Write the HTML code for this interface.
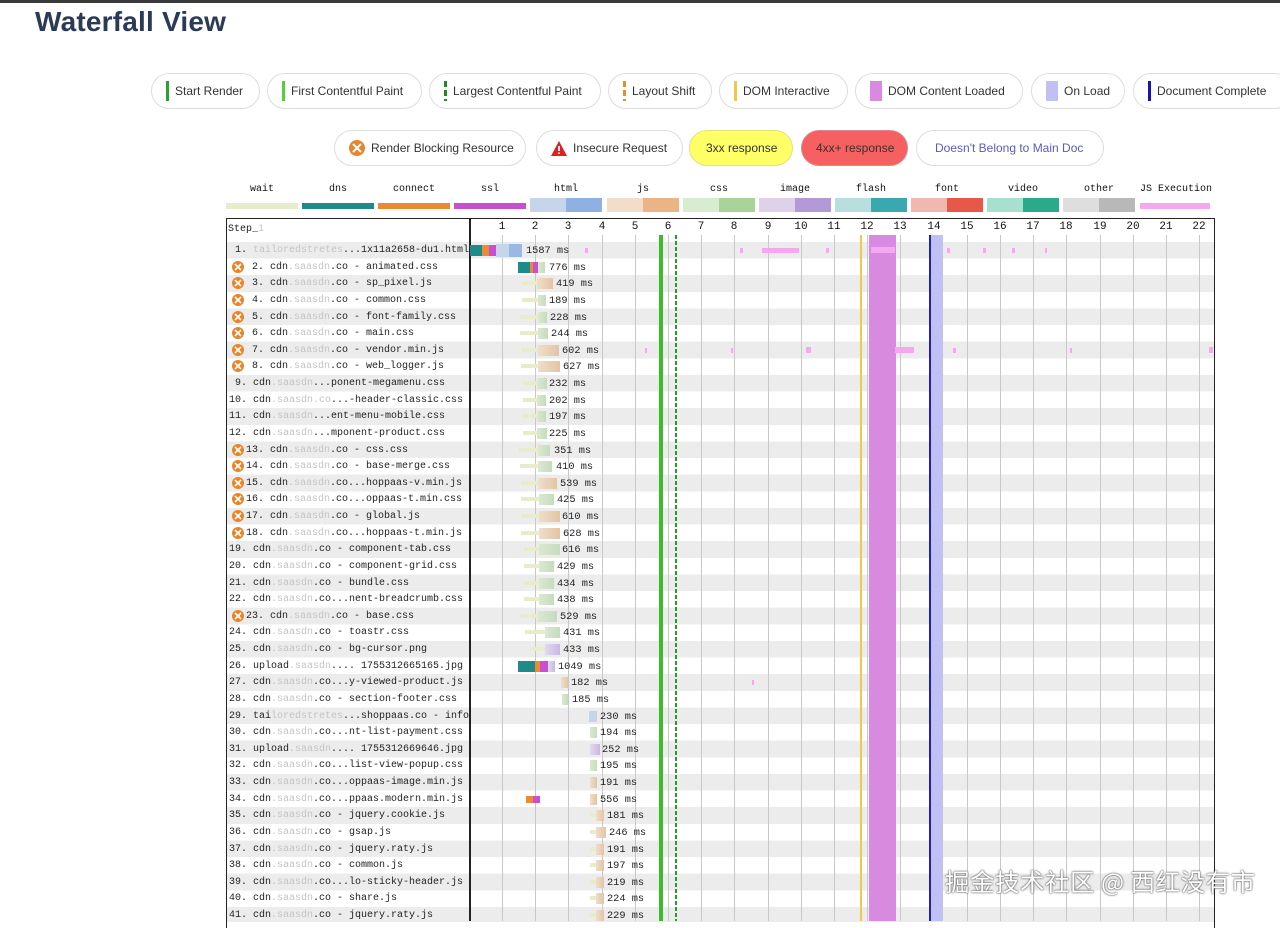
<!DOCTYPE html>
<html><head><meta charset="utf-8"><style>
*{margin:0;padding:0;box-sizing:border-box}
body{width:1280px;height:921px;overflow:hidden;background:#fff;position:relative;font-family:"Liberation Sans",sans-serif}
.topbar{position:absolute;left:0;top:0;width:1280px;height:3px;background:#3a3a3a}
h1{position:absolute;left:35px;top:6px;font-size:28px;font-weight:bold;color:#2b3a55;letter-spacing:0.2px}
.p{position:absolute;height:36px;border:1px solid #ddd;border-radius:18px;font-size:12px;color:#333;display:flex;align-items:center;padding-left:14px;white-space:nowrap}
.p i{display:inline-block;width:3px;height:20px;margin-right:6px}
.lg{position:absolute;top:184px;font:10px "Liberation Mono",monospace;color:#111;text-align:center;width:72px}
.lb{position:absolute;height:14px;top:198px;width:72px}
.tbl{position:absolute;left:226px;top:218px;width:989px;height:710px;border:1.5px solid #222;border-bottom:none;background:#fff}
.str{position:absolute;left:227px;top:242px;width:987px;height:680px;background:repeating-linear-gradient(to bottom,#ececec 0,#ececec 16.625px,#fff 16.625px,#fff 33.25px)}
.div{position:absolute;left:469px;top:218px;width:1.5px;height:703px;background:#222}
.g{position:absolute;top:235px;width:1px;height:686px;background:#c8c8c8}
.tk{position:absolute;top:221px;font:11px "Liberation Mono",monospace;color:#111;width:20px;text-align:center}
.r{position:absolute;left:0;width:1280px;height:16.6px}
.t{position:absolute;top:3px;font:10px "Liberation Mono",monospace;color:#222;white-space:pre}
.t u{text-decoration:none;color:#c4c4c4}
.m{position:absolute;top:3px;font:10.3px "Liberation Mono",monospace;color:#222;white-space:pre}
.r b{position:absolute;top:3px;height:11px}
.r b.w{top:6px;height:4px;background:#e9ecc8}
.d{background:#1f8a8a}.c{background:#ec8a32}.s{background:#c84fd0}
.h{background:linear-gradient(90deg,#c6d5ea 50%,#9bb8e4 50%)}
.j{background:linear-gradient(90deg,#efdecb,#e3c4a4)}
.cs{background:linear-gradient(90deg,#dbe8d3,#c5dcbc)}
.im{background:linear-gradient(90deg,#e2daee,#c9b8e0)}
.x{background:#f5a8ef}
.bi{position:absolute;left:232px;top:2px;width:12px;height:12px}
.ml{position:absolute;top:235px;height:686px}
.wm{position:absolute;left:945px;top:864px;font:24.5px "Noto Sans CJK SC",sans-serif;color:#fff;text-shadow:0 0 2px #555,0 0 1px #333;white-space:nowrap;letter-spacing:0.5px}
</style></head><body>
<div class="topbar"></div>
<h1>Waterfall View</h1>

<div class="p" style="left:151px;top:73px;width:109px"><i style="background:#2ea02e"></i>Start Render</div>
<div class="p" style="left:267px;top:73px;width:155px"><i style="background:#55d035"></i>First Contentful Paint</div>
<div class="p" style="left:429px;top:73px;width:172px"><i style="background:repeating-linear-gradient(#1e8a1e 0 6px,transparent 6px 9px)"></i>Largest Contentful Paint</div>
<div class="p" style="left:608px;top:73px;width:104px"><i style="background:repeating-linear-gradient(#ec8a32 0 6px,transparent 6px 9px)"></i>Layout Shift</div>
<div class="p" style="left:719px;top:73px;width:129px"><i style="background:#f0c94a"></i>DOM Interactive</div>
<div class="p" style="left:855px;top:73px;width:168px"><i style="background:#d88ae0;width:12px"></i>DOM Content Loaded</div>
<div class="p" style="left:1031px;top:73px;width:94px"><i style="background:#c0c0f5;width:12px"></i>On Load</div>
<div class="p" style="left:1133px;top:73px;width:160px"><i style="background:#1515bb"></i>Document Complete</div>

<div class="p" style="left:334px;top:130px;width:192px"><svg width="16" height="16" viewBox="0 0 16 16" style="margin-right:6px"><circle cx="8" cy="8" r="8" fill="#e8842a"/><path d="M4 4L12 12M12 4L4 12" stroke="#fff" stroke-width="2"/></svg>Render Blocking Resource</div>
<div class="p" style="left:536px;top:130px;width:147px"><svg width="16" height="15" viewBox="0 0 16 15" style="margin-right:6px"><path d="M8 0L16 15H0Z" fill="#e02020"/><path d="M8 5V10M8 11.5V13" stroke="#fff" stroke-width="1.8"/></svg>Insecure Request</div>
<div class="p" style="left:689px;top:130px;width:104px;background:#ffff66;border-color:#e0e080;padding-left:16px">3xx response</div>
<div class="p" style="left:801px;top:130px;width:107px;background:#f76060;border-color:#d88;padding-left:14px">4xx+ response</div>
<div class="p" style="left:916px;top:130px;width:188px;color:#5a5ac0;padding-left:18px">Doesn't Belong to Main Doc</div>

<div class="lg" style="left:226px">wait</div><div class="lb" style="left:226px;top:203px;height:6px;background:#e9ecc8"></div>
<div class="lg" style="left:302px">dns</div><div class="lb" style="left:302px;top:203px;height:6px;background:#1f8a8a"></div>
<div class="lg" style="left:378px">connect</div><div class="lb" style="left:378px;top:203px;height:6px;background:#ec8a32"></div>
<div class="lg" style="left:454px">ssl</div><div class="lb" style="left:454px;top:203px;height:6px;background:#c84fd0"></div>
<div class="lg" style="left:530px">html</div><div class="lb" style="left:530px;background:linear-gradient(90deg,#c6d5ea 50%,#8fb0e2 50%)"></div>
<div class="lg" style="left:607px">js</div><div class="lb" style="left:607px;background:linear-gradient(90deg,#f1ddc9 50%,#eab484 50%)"></div>
<div class="lg" style="left:683px">css</div><div class="lb" style="left:683px;background:linear-gradient(90deg,#d8ecd2 50%,#a8d49a 50%)"></div>
<div class="lg" style="left:759px">image</div><div class="lb" style="left:759px;background:linear-gradient(90deg,#ddd2ea 50%,#b39ad6 50%)"></div>
<div class="lg" style="left:835px">flash</div><div class="lb" style="left:835px;background:linear-gradient(90deg,#b8dede 50%,#3aa8b0 50%)"></div>
<div class="lg" style="left:911px">font</div><div class="lb" style="left:911px;background:linear-gradient(90deg,#f0b8b0 50%,#e85848 50%)"></div>
<div class="lg" style="left:987px">video</div><div class="lb" style="left:987px;background:linear-gradient(90deg,#a8e0d0 50%,#2aaa88 50%)"></div>
<div class="lg" style="left:1063px">other</div><div class="lb" style="left:1063px;background:linear-gradient(90deg,#dedede 50%,#b8b8b8 50%)"></div>
<div class="lg" style="left:1137px;width:78px">JS Execution</div><div class="lb" style="left:1140px;top:203px;height:6px;width:70px;background:#f5a8ef"></div>

<div class="tbl"></div>
<div class="str"></div>
<div class="t" style="left:228px;top:224px;font-size:10px">Step_<u>1</u></div>

<div class="g" style="left:502px"></div><div class="g" style="left:535px"></div><div class="g" style="left:568px"></div><div class="g" style="left:602px"></div><div class="g" style="left:635px"></div><div class="g" style="left:668px"></div><div class="g" style="left:701px"></div><div class="g" style="left:734px"></div><div class="g" style="left:768px"></div><div class="g" style="left:801px"></div><div class="g" style="left:834px"></div><div class="g" style="left:867px"></div><div class="g" style="left:900px"></div><div class="g" style="left:934px"></div><div class="g" style="left:967px"></div><div class="g" style="left:1000px"></div><div class="g" style="left:1033px"></div><div class="g" style="left:1066px"></div><div class="g" style="left:1100px"></div><div class="g" style="left:1133px"></div><div class="g" style="left:1166px"></div><div class="g" style="left:1199px"></div>
<div class="tk" style="left:492px">1</div><div class="tk" style="left:525px">2</div><div class="tk" style="left:558px">3</div><div class="tk" style="left:592px">4</div><div class="tk" style="left:625px">5</div><div class="tk" style="left:658px">6</div><div class="tk" style="left:691px">7</div><div class="tk" style="left:724px">8</div><div class="tk" style="left:758px">9</div><div class="tk" style="left:791px">10</div><div class="tk" style="left:824px">11</div><div class="tk" style="left:857px">12</div><div class="tk" style="left:890px">13</div><div class="tk" style="left:924px">14</div><div class="tk" style="left:957px">15</div><div class="tk" style="left:990px">16</div><div class="tk" style="left:1023px">17</div><div class="tk" style="left:1056px">18</div><div class="tk" style="left:1090px">19</div><div class="tk" style="left:1123px">20</div><div class="tk" style="left:1156px">21</div><div class="tk" style="left:1189px">22</div>
<div class="div"></div>

<div class="ml" style="left:869px;width:27px;background:#d88ae0"></div>
<div class="ml" style="left:929px;width:14px;background:#c0c0f5"></div>
<div class="ml" style="left:929px;width:2px;background:#2222aa"></div>
<div class="ml" style="left:860px;width:2px;background:#f0c94a"></div>
<div class="ml" style="left:659px;width:4px;background:#3dbb2a"></div>
<div class="ml" style="left:675px;width:2px;background:repeating-linear-gradient(#2a9a2a 0 4px,transparent 4px 6px)"></div>

<div class="r" style="top:242px"><span class="t" style="left:229px"> 1. <u>tailoredstretes</u>...1x11a2658-du1.html</span><b class="d" style="left:470px;width:12px"></b><b class="c" style="left:482px;width:7px"></b><b class="s" style="left:489px;width:7px"></b><b class="h" style="left:496px;width:26px;height:13px;top:2px"></b><span class="m" style="left:526px">1587 ms</span><b class="x" style="left:585px;width:3px;height:5px;top:6px"></b><b class="x" style="left:740px;width:3px;height:5px;top:6px"></b><b class="x" style="left:762px;width:37px;height:5px;top:6px"></b><b class="x" style="left:826px;width:3px;height:5px;top:6px"></b><b class="x" style="left:871px;width:24px;height:6px;top:5px"></b><b class="x" style="left:947px;width:3px;height:5px;top:6px"></b><b class="x" style="left:983px;width:3px;height:5px;top:6px"></b><b class="x" style="left:1012px;width:3px;height:5px;top:6px"></b><b class="x" style="left:1045px;width:2px;height:5px;top:6px"></b></div>
<div class="r" style="top:258.6px"><svg class="bi" viewBox="0 0 12 12"><circle cx="6" cy="6" r="6" fill="#e8842a"/><path d="M3 3L9 9M9 3L3 9" stroke="#fff" stroke-width="1.6"/></svg><span class="t" style="left:246px"> 2. cdn<u>.saasdn</u>.co - animated.css</span><b class="d" style="left:518px;width:12px"></b><b class="c" style="left:530px;width:3px"></b><b class="s" style="left:533px;width:5px"></b><b class="cs" style="left:538px;width:7px"></b><span class="m" style="left:549px">776 ms</span></div>
<div class="r" style="top:275.3px"><svg class="bi" viewBox="0 0 12 12"><circle cx="6" cy="6" r="6" fill="#e8842a"/><path d="M3 3L9 9M9 3L3 9" stroke="#fff" stroke-width="1.6"/></svg><span class="t" style="left:246px"> 3. cdn<u>.saasdn</u>.co - sp_pixel.js</span><b class="w" style="left:522px;width:15px"></b><b class="j" style="left:537px;width:16px"></b><span class="m" style="left:556px">419 ms</span></div>
<div class="r" style="top:291.9px"><svg class="bi" viewBox="0 0 12 12"><circle cx="6" cy="6" r="6" fill="#e8842a"/><path d="M3 3L9 9M9 3L3 9" stroke="#fff" stroke-width="1.6"/></svg><span class="t" style="left:246px"> 4. cdn<u>.saasdn</u>.co - common.css</span><b class="w" style="left:522px;width:16px"></b><b class="cs" style="left:538px;width:8px"></b><span class="m" style="left:549px">189 ms</span></div>
<div class="r" style="top:308.5px"><svg class="bi" viewBox="0 0 12 12"><circle cx="6" cy="6" r="6" fill="#e8842a"/><path d="M3 3L9 9M9 3L3 9" stroke="#fff" stroke-width="1.6"/></svg><span class="t" style="left:246px"> 5. cdn<u>.saasdn</u>.co - font-family.css</span><b class="w" style="left:520px;width:18px"></b><b class="cs" style="left:538px;width:9px"></b><span class="m" style="left:550px">228 ms</span></div>
<div class="r" style="top:325.1px"><svg class="bi" viewBox="0 0 12 12"><circle cx="6" cy="6" r="6" fill="#e8842a"/><path d="M3 3L9 9M9 3L3 9" stroke="#fff" stroke-width="1.6"/></svg><span class="t" style="left:246px"> 6. cdn<u>.saasdn</u>.co - main.css</span><b class="w" style="left:520px;width:18px"></b><b class="cs" style="left:538px;width:10px"></b><span class="m" style="left:551px">244 ms</span></div>
<div class="r" style="top:341.8px"><svg class="bi" viewBox="0 0 12 12"><circle cx="6" cy="6" r="6" fill="#e8842a"/><path d="M3 3L9 9M9 3L3 9" stroke="#fff" stroke-width="1.6"/></svg><span class="t" style="left:246px"> 7. cdn<u>.saasdn</u>.co - vendor.min.js</span><b class="w" style="left:521px;width:17px"></b><b class="j" style="left:538px;width:21px"></b><span class="m" style="left:562px">602 ms</span><b class="x" style="left:645px;width:2px;height:5px;top:6px"></b><b class="x" style="left:731px;width:2px;height:5px;top:6px"></b><b class="x" style="left:806px;width:5px;height:6px;top:5px"></b><b class="x" style="left:895px;width:19px;height:6px;top:5px"></b><b class="x" style="left:953px;width:3px;height:5px;top:6px"></b><b class="x" style="left:1070px;width:2px;height:5px;top:6px"></b><b class="x" style="left:1209px;width:4px;height:6px;top:5px"></b></div>
<div class="r" style="top:358.4px"><svg class="bi" viewBox="0 0 12 12"><circle cx="6" cy="6" r="6" fill="#e8842a"/><path d="M3 3L9 9M9 3L3 9" stroke="#fff" stroke-width="1.6"/></svg><span class="t" style="left:246px"> 8. cdn<u>.saasdn</u>.co - web_logger.js</span><b class="w" style="left:521px;width:17px"></b><b class="j" style="left:538px;width:22px"></b><span class="m" style="left:563px">627 ms</span></div>
<div class="r" style="top:375px"><span class="t" style="left:229px"> 9. cdn<u>.saasdn</u>...ponent-megamenu.css</span><b class="w" style="left:523px;width:14px"></b><b class="cs" style="left:537px;width:10px"></b><span class="m" style="left:549px">232 ms</span></div>
<div class="r" style="top:391.6px"><span class="t" style="left:229px">10. cdn<u>.saasdn.co</u>...-header-classic.css</span><b class="w" style="left:523px;width:14px"></b><b class="cs" style="left:537px;width:9px"></b><span class="m" style="left:549px">202 ms</span></div>
<div class="r" style="top:408.3px"><span class="t" style="left:229px">11. cdn<u>.saasdn</u>...ent-menu-mobile.css</span><b class="w" style="left:523px;width:14px"></b><b class="cs" style="left:537px;width:9px"></b><span class="m" style="left:549px">197 ms</span></div>
<div class="r" style="top:424.9px"><span class="t" style="left:229px">12. cdn<u>.saasdn</u>...mponent-product.css</span><b class="w" style="left:523px;width:14px"></b><b class="cs" style="left:537px;width:10px"></b><span class="m" style="left:549px">225 ms</span></div>
<div class="r" style="top:441.5px"><svg class="bi" viewBox="0 0 12 12"><circle cx="6" cy="6" r="6" fill="#e8842a"/><path d="M3 3L9 9M9 3L3 9" stroke="#fff" stroke-width="1.6"/></svg><span class="t" style="left:246px">13. cdn<u>.saasdn</u>.co - css.css</span><b class="w" style="left:519px;width:19px"></b><b class="cs" style="left:538px;width:12px"></b><span class="m" style="left:554px">351 ms</span></div>
<div class="r" style="top:458.1px"><svg class="bi" viewBox="0 0 12 12"><circle cx="6" cy="6" r="6" fill="#e8842a"/><path d="M3 3L9 9M9 3L3 9" stroke="#fff" stroke-width="1.6"/></svg><span class="t" style="left:246px">14. cdn<u>.saasdn</u>.co - base-merge.css</span><b class="w" style="left:520px;width:18px"></b><b class="cs" style="left:538px;width:14px"></b><span class="m" style="left:556px">410 ms</span></div>
<div class="r" style="top:474.8px"><svg class="bi" viewBox="0 0 12 12"><circle cx="6" cy="6" r="6" fill="#e8842a"/><path d="M3 3L9 9M9 3L3 9" stroke="#fff" stroke-width="1.6"/></svg><span class="t" style="left:246px">15. cdn<u>.saasdn</u>.co...hoppaas-v.min.js</span><b class="w" style="left:521px;width:17px"></b><b class="j" style="left:538px;width:19px"></b><span class="m" style="left:560px">539 ms</span></div>
<div class="r" style="top:491.4px"><svg class="bi" viewBox="0 0 12 12"><circle cx="6" cy="6" r="6" fill="#e8842a"/><path d="M3 3L9 9M9 3L3 9" stroke="#fff" stroke-width="1.6"/></svg><span class="t" style="left:246px">16. cdn<u>.saasdn</u>.co...oppaas-t.min.css</span><b class="w" style="left:521px;width:18px"></b><b class="cs" style="left:539px;width:15px"></b><span class="m" style="left:557px">425 ms</span></div>
<div class="r" style="top:508px"><svg class="bi" viewBox="0 0 12 12"><circle cx="6" cy="6" r="6" fill="#e8842a"/><path d="M3 3L9 9M9 3L3 9" stroke="#fff" stroke-width="1.6"/></svg><span class="t" style="left:246px">17. cdn<u>.saasdn</u>.co - global.js</span><b class="w" style="left:521px;width:18px"></b><b class="j" style="left:539px;width:21px"></b><span class="m" style="left:562px">610 ms</span></div>
<div class="r" style="top:524.6px"><svg class="bi" viewBox="0 0 12 12"><circle cx="6" cy="6" r="6" fill="#e8842a"/><path d="M3 3L9 9M9 3L3 9" stroke="#fff" stroke-width="1.6"/></svg><span class="t" style="left:246px">18. cdn<u>.saasdn</u>.co...hoppaas-t.min.js</span><b class="w" style="left:521px;width:18px"></b><b class="j" style="left:539px;width:21px"></b><span class="m" style="left:563px">628 ms</span></div>
<div class="r" style="top:541.3px"><span class="t" style="left:229px">19. cdn<u>.saasdn</u>.co - component-tab.css</span><b class="w" style="left:524px;width:15px"></b><b class="cs" style="left:539px;width:21px"></b><span class="m" style="left:562px">616 ms</span></div>
<div class="r" style="top:557.9px"><span class="t" style="left:229px">20. cdn<u>.saasdn</u>.co - component-grid.css</span><b class="w" style="left:524px;width:15px"></b><b class="cs" style="left:539px;width:15px"></b><span class="m" style="left:557px">429 ms</span></div>
<div class="r" style="top:574.5px"><span class="t" style="left:229px">21. cdn<u>.saasdn</u>.co - bundle.css</span><b class="w" style="left:524px;width:15px"></b><b class="cs" style="left:539px;width:15px"></b><span class="m" style="left:557px">434 ms</span></div>
<div class="r" style="top:591.1px"><span class="t" style="left:229px">22. cdn<u>.saasdn</u>.co...nent-breadcrumb.css</span><b class="w" style="left:524px;width:15px"></b><b class="cs" style="left:539px;width:15px"></b><span class="m" style="left:557px">438 ms</span></div>
<div class="r" style="top:607.8px"><svg class="bi" viewBox="0 0 12 12"><circle cx="6" cy="6" r="6" fill="#e8842a"/><path d="M3 3L9 9M9 3L3 9" stroke="#fff" stroke-width="1.6"/></svg><span class="t" style="left:246px">23. cdn<u>.saasdn</u>.co - base.css</span><b class="w" style="left:520px;width:18px"></b><b class="cs" style="left:538px;width:19px"></b><span class="m" style="left:560px">529 ms</span></div>
<div class="r" style="top:624.4px"><span class="t" style="left:229px">24. cdn<u>.saasdn</u>.co - toastr.css</span><b class="w" style="left:525px;width:20px"></b><b class="cs" style="left:545px;width:15px"></b><span class="m" style="left:563px">431 ms</span></div>
<div class="r" style="top:641px"><span class="t" style="left:229px">25. cdn<u>.saasdn</u>.co - bg-cursor.png</span><b class="w" style="left:530px;width:15px"></b><b class="im" style="left:545px;width:15px"></b><span class="m" style="left:563px">433 ms</span></div>
<div class="r" style="top:657.6px"><span class="t" style="left:229px">26. upload<u>.saasdn</u>.... 1755312665165.jpg</span><b class="d" style="left:518px;width:17px"></b><b class="c" style="left:535px;width:5px"></b><b class="s" style="left:540px;width:8px"></b><b class="im" style="left:548px;width:7px"></b><span class="m" style="left:558px">1049 ms</span></div>
<div class="r" style="top:674.3px"><span class="t" style="left:229px">27. cdn<u>.saasdn</u>.co...y-viewed-product.js</span><b class="j" style="left:561px;width:7px"></b><span class="m" style="left:571px">182 ms</span><b class="x" style="left:752px;width:2px;height:5px;top:6px"></b></div>
<div class="r" style="top:690.9px"><span class="t" style="left:229px">28. cdn<u>.saasdn</u>.co - section-footer.css</span><b class="cs" style="left:562px;width:6px"></b><span class="m" style="left:572px">185 ms</span></div>
<div class="r" style="top:707.5px"><span class="t" style="left:229px">29. tai<u>loredstretes</u>...shoppaas.co - info</span><b class="h" style="left:589px;width:8px;background:#c6d5ea"></b><span class="m" style="left:600px">230 ms</span></div>
<div class="r" style="top:724.1px"><span class="t" style="left:229px">30. cdn<u>.saasdn</u>.co...nt-list-payment.css</span><b class="cs" style="left:590px;width:7px"></b><span class="m" style="left:600px">194 ms</span></div>
<div class="r" style="top:740.8px"><span class="t" style="left:229px">31. upload<u>.saasdn</u>.... 1755312669646.jpg</span><b class="im" style="left:590px;width:10px"></b><span class="m" style="left:602px">252 ms</span></div>
<div class="r" style="top:757.4px"><span class="t" style="left:229px">32. cdn<u>.saasdn</u>.co...list-view-popup.css</span><b class="cs" style="left:590px;width:7px"></b><span class="m" style="left:600px">195 ms</span></div>
<div class="r" style="top:774px"><span class="t" style="left:229px">33. cdn<u>.saasdn</u>.co...oppaas-image.min.js</span><b class="j" style="left:590px;width:7px"></b><span class="m" style="left:600px">191 ms</span></div>
<div class="r" style="top:790.6px"><span class="t" style="left:229px">34. cdn<u>.saasdn</u>.co...ppaas.modern.min.js</span><b class="c" style="left:526px;width:7px;top:5px;height:7px"></b><b class="s" style="left:533px;width:7px;top:5px;height:7px"></b><b class="j" style="left:590px;width:7px"></b><span class="m" style="left:600px">556 ms</span></div>
<div class="r" style="top:807.3px"><span class="t" style="left:229px">35. cdn<u>.saasdn</u>.co - jquery.cookie.js</span><b class="w" style="left:590px;width:6px"></b><b class="j" style="left:596px;width:8px"></b><span class="m" style="left:607px">181 ms</span></div>
<div class="r" style="top:823.9px"><span class="t" style="left:229px">36. cdn<u>.saasdn</u>.co - gsap.js</span><b class="w" style="left:590px;width:6px"></b><b class="j" style="left:596px;width:10px"></b><span class="m" style="left:609px">246 ms</span></div>
<div class="r" style="top:840.5px"><span class="t" style="left:229px">37. cdn<u>.saasdn</u>.co - jquery.raty.js</span><b class="w" style="left:590px;width:6px"></b><b class="j" style="left:596px;width:8px"></b><span class="m" style="left:607px">191 ms</span></div>
<div class="r" style="top:857.1px"><span class="t" style="left:229px">38. cdn<u>.saasdn</u>.co - common.js</span><b class="w" style="left:590px;width:6px"></b><b class="j" style="left:596px;width:8px"></b><span class="m" style="left:607px">197 ms</span></div>
<div class="r" style="top:873.8px"><span class="t" style="left:229px">39. cdn<u>.saasdn</u>.co...lo-sticky-header.js</span><b class="w" style="left:590px;width:6px"></b><b class="j" style="left:596px;width:8px"></b><span class="m" style="left:607px">219 ms</span></div>
<div class="r" style="top:890.4px"><span class="t" style="left:229px">40. cdn<u>.saasdn</u>.co - share.js</span><b class="w" style="left:590px;width:6px"></b><b class="j" style="left:596px;width:8px"></b><span class="m" style="left:607px">224 ms</span></div>
<div class="r" style="top:907px"><span class="t" style="left:229px">41. cdn<u>.saasdn</u>.co - jquery.raty.js</span><b class="w" style="left:590px;width:6px"></b><b class="j" style="left:596px;width:8px"></b><span class="m" style="left:607px">229 ms</span></div>

<div class="wm">掘金技术社区 @ 西红没有市</div>
</body></html>
